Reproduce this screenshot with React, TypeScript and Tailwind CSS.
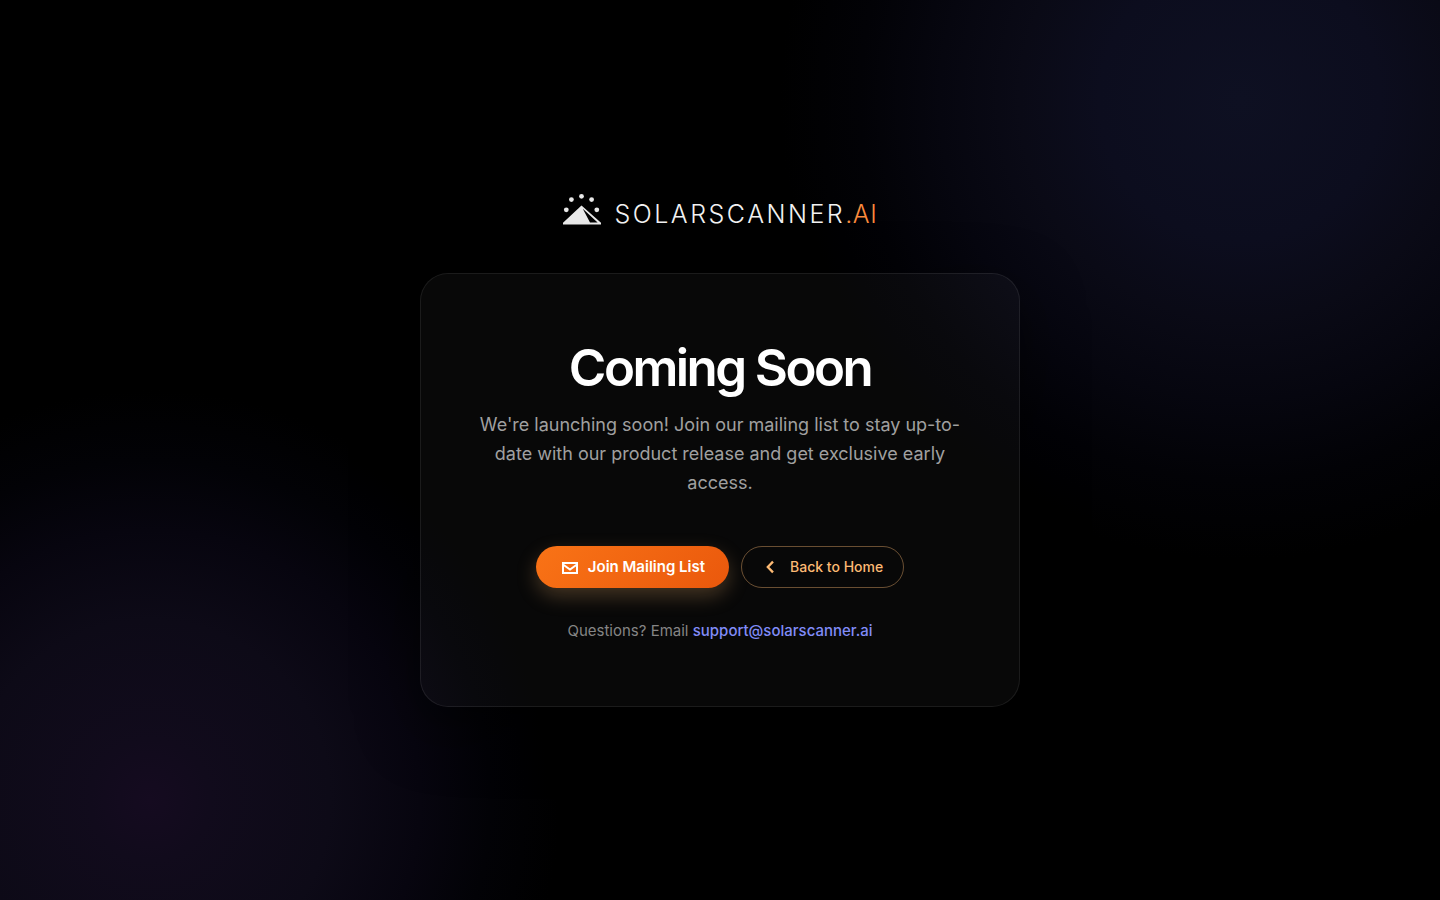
import React from "react";

function LogoMark() {
  return (
    <svg width="40" height="32" viewBox="0 0 40 32" fill="#e8e8e8" aria-hidden="true">
      <circle cx="4.3" cy="16.8" r="2.4" />
      <circle cx="9.4" cy="6.6" r="2.4" />
      <circle cx="19.5" cy="3.3" r="2.4" />
      <circle cx="29.6" cy="6.6" r="2.4" />
      <circle cx="34.8" cy="16.8" r="2.4" />
      <path fillRule="evenodd" d="M19.5 12.5 L39 29.8 V31.4 H1 V29.8 Z M20.8 15.8 L28 29.4 H35.6 Z" />
    </svg>
  );
}

function MailIcon() {
  return (
    <svg width="20" height="20" viewBox="0 0 20 20" fill="none" stroke="currentColor" strokeWidth="2" aria-hidden="true">
      <path d="M3 6h14v10H3z" />
      <path d="M3 7.5l7 5 7-5" />
    </svg>
  );
}

function BackIcon() {
  return (
    <svg width="20" height="20" viewBox="0 0 20 20" fill="none" stroke="currentColor" strokeWidth="2.3" aria-hidden="true">
      <path d="M11 4.6L5.8 10l5.2 5.4" />
    </svg>
  );
}

export default function App() {
  return (
    <div className="relative isolate flex min-h-screen flex-col items-center justify-center overflow-hidden bg-black px-4 font-['Inter',sans-serif] text-white">
      <div
        aria-hidden="true"
        className="absolute inset-0 -z-10 bg-[radial-gradient(circle_at_calc(100%-200px)_100px,#0e1022_0,#0c0d1e_140px,#0a0a16_220px,#06060f_300px,#020206_380px,#000000_460px)]"
      />
      <div
        aria-hidden="true"
        className="absolute inset-0 -z-10 bg-[radial-gradient(circle_at_150px_calc(100%-100px),#150b20_0,#110b1c_60px,#0d0a17_180px,#07050f_270px,#020206_340px,transparent_410px)]"
      />

      <header className="mb-12 flex items-end gap-3">
        <LogoMark />
        <span className="text-[25px] leading-[22px] font-light tracking-widest text-[#f2f2f2]">
          SOLARSCANNER<span className="tracking-wide text-[#fb8a3c]">.AI</span>
        </span>
      </header>

      <main className="flex w-full max-w-[600px] flex-col items-center rounded-[28px] border border-white/8 bg-white/3 px-14 py-16 text-center shadow-[0_20px_60px_rgba(0,0,0,0.5)]">
        <h1 className="text-[51px] leading-[60px] font-semibold tracking-tighter">Coming Soon</h1>
        <p className="mt-3 text-lg leading-[29px] text-[#a0a0a0]">
          We're launching soon! Join our mailing list to stay up-to-date with our product release and get exclusive early access.
        </p>
        <div className="mt-[49px] flex flex-wrap justify-center gap-3">
          <button
            type="button"
            className="flex h-[42px] items-center gap-2 rounded-full bg-linear-135 from-[#f97316] to-[#ea580c] px-6 text-[15px] font-semibold shadow-[0_8px_20px_rgba(253,186,116,0.25)]"
          >
            <MailIcon />
            Join Mailing List
          </button>
          <a
            href="/"
            className="flex h-[42px] items-center gap-2 rounded-full border border-[#fdba74]/40 px-5 text-sm font-medium text-[#fdba74]"
          >
            <BackIcon />
            Back to Home
          </a>
        </div>
        <p className="mt-8 text-[15px] leading-[22px] text-[#858585]">
          Questions? Email{" "}
          <a href="mailto:support@solarscanner.ai" className="font-medium text-[#818cf8]">
            support@solarscanner.ai
          </a>
        </p>
      </main>
    </div>
  );
}
